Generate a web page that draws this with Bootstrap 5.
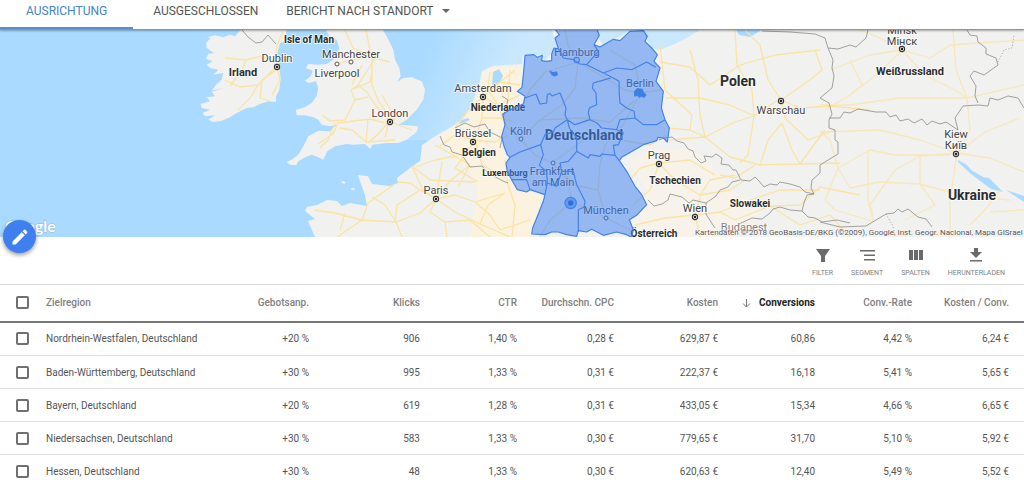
<!DOCTYPE html>
<html lang="de">
<head>
<meta charset="utf-8">
<meta name="viewport" content="width=device-width, initial-scale=1">
<title>Standorte</title>
<link href="https://cdn.jsdelivr.net/npm/bootstrap@5.3.0/dist/css/bootstrap.min.css" rel="stylesheet">
<style>
  body { font-family: Roboto, "Liberation Sans", sans-serif; font-size: 10px; color: #5a5a5a; }
  .tabbar { height: 30px; border-bottom: 1px solid #8d949b; box-shadow: 0 1px 2px rgba(0,0,0,.3); position: relative; }
  .tabbar .nav-link { font-size: 12px; line-height: 20px; font-weight: 400; color: #555; padding: 1px 0 8px; border-radius: 0; }
  .tabbar .nav-link.active { color: #4384cc; border-bottom: 2px solid #5a8fcb; padding: 1px 26px 6px; }
  .caret { border: 4px solid transparent; border-top-color: #666; border-bottom: 0; }
  .geo { height: 207px; background: #aadaff; }
  .geo svg { display: block; width: 100%; height: 100%; }
  .geo text { font-family: Roboto, "Liberation Sans", sans-serif; fill: #444; stroke: #fff; stroke-opacity: .7; stroke-width: 2px; paint-order: stroke; stroke-linejoin: round; }
  .geo .city { font-size: 11px; text-anchor: middle; }
  .geo .land { font-size: 10px; font-weight: 700; fill: #2d2d2d; text-anchor: middle; }
  .geo .land-sm { font-size: 9px; }
  .geo .land-md { font-size: 11px; }
  .geo .land-lg { font-size: 14px; }
  .geo .fine { font-size: 8px; fill: #555; stroke-width: 1px; }
  .geo .logo { font-family: Lato, sans-serif; font-size: 16px; font-weight: 700; fill: #fff; stroke: #7fa9c9; stroke-width: 1px; }
  .edit-btn { left: 3px; bottom: -16px; width: 33px; height: 33px; background: #3f80ee; box-shadow: 0 2px 4px rgba(0,0,0,.4); }
  .tools { height: 47px; gap: 18px; padding: 9px 19px 0 0; }
  .tools button { font-size: 7px; line-height: 8px; color: #808080; }
  .tools svg { width: 18px; height: 18px; fill: #6a6a6a; margin-bottom: 5px; }
  .report { table-layout: fixed; border-top: 1px solid #dcdcdc; --bs-table-color: #555; }
  .report th, .report td { height: 33px; padding: 1px 15px 0 0; line-height: 14px; text-align: right; vertical-align: middle; border-bottom: 1px solid #e0e0e0; white-space: nowrap; }
  .report thead th { height: 37px; padding-top: 0; font-weight: 500; color: #808080; border-bottom: 2px solid #787878; }
  .report tbody tr:first-child td { height: 34px; }
  .report thead th.sorted { color: #222; font-weight: 700; }
  .report .pick { text-align: left; padding: 0 0 0 16px; }
  .report td.region, .report th.region { text-align: left; padding-right: 0; overflow: visible; }
  .report .form-check-input { display: block; width: 13px; height: 13px; margin: 0; border: 2px solid #707070; border-radius: 2px; }
  .c-pick { width: 46px; } .c-a { width: 111px; } .c-b { width: 97px; } .c-c { width: 104px; }
</style>
</head>
<body class="bg-white vh-100 overflow-hidden">
<header>
  <nav class="tabbar nav d-flex align-items-start bg-white z-1" aria-label="Standorte">
    <a class="nav-link active me-3" href="#">AUSRICHTUNG</a>
    <a class="nav-link ms-1 me-4" href="#">AUSGESCHLOSSEN</a>
    <a class="nav-link ms-1 d-flex align-items-center" href="#">BERICHT NACH STANDORT <span class="caret ms-2"></span></a>
  </nav>
</header>
<main>
  <section class="geo position-relative" aria-label="Karte">
    <svg viewBox="0 30 1024 207" preserveAspectRatio="xMidYMid slice">
      <defs>
        <g id="capital"><circle r="2.6" fill="#fff" stroke="#333" stroke-width="1.1"/><circle r="1.3" fill="#222"/></g>
        <circle id="town" r="2" fill="#fff" stroke="#555" stroke-width="1"/>
        <linearGradient id="shoal" gradientUnits="userSpaceOnUse" x1="425" y1="50" x2="500" y2="85"><stop offset="0" stop-color="#c9e8fd" stop-opacity="0"/><stop offset="1" stop-color="#c9e8fd"/></linearGradient>
      </defs>
      <path fill="url(#shoal)" d="M400 28H700L655 70 520 75 480 105 440 140 400 140z"/>
      <!-- land masses -->
      <g fill="#f1f1f0">
        <g transform="translate(190 28) scale(.333333)">
          <path d="M290 0L285 40 270 45 262 75 265 100 272 150 268 185 258 205 258 222 235 220 210 228 190 238 170 240 150 250 135 258 120 268 95 278 70 282 55 275 75 262 45 265 38 255 60 245 35 240 32 228 60 220 50 208 75 205 65 192 100 180 65 188 78 170 95 155 100 135 70 140 85 125 60 120 50 110 68 100 48 92 55 78 72 75 50 60 48 45 62 30 52 28 75 22 100 28 120 20 135 25 150 8 160 0z"/>
          <path d="M405 0L418 25 440 35 448 60 440 80 430 95 410 108 385 110 355 108 348 120 368 128 362 145 345 158 355 165 378 160 385 180 380 205 365 225 345 238 318 245 320 262 345 262 370 268 385 275 395 290 420 295 440 290 420 310 385 308 355 325 340 355 325 380 305 395 290 402 300 410 318 412 325 400 345 388 365 380 385 388 400 395 412 370 435 355 470 348 490 350 525 348 540 362 548 350 590 345 625 345 650 335 680 312 685 295 650 292 625 290 650 275 680 245 700 215 705 185 695 160 665 148 640 150 622 162 632 145 628 120 615 95 610 65 590 25 575 0z"/>
          <path d="M455 458l12 4-4 6-8-4zM482 480l13 1-3 6-8-2z"/>
        </g>
        <path d="M315 237L308 221 315 219 305 211 307 207 317 205 327 200 337 201 342 206 350 203 367 206 365 195 362 187 358 175 368 176 372 184 390 186 398 183 397 178 410 168 420 161 422 145 437 135 453 126 465 116 473 101 479 85 482 71 493 66 522 64 523 55 542 55 545 61 552 52 558 48 553 35 552 28H597L597 35 603 45 617 38 630 31 643 32 652 48 660 50 677 43 690 36 702 28H735L739 35 750 37 760 31 764 28H1024V240H315z"/>
      </g>
      <path fill="#fbf3df" d="M440 136L455 127 466 116 475 101 480 86 483 73 493 68 521 66 524 90 505 112 503 148 508 178 528 190 542 196 533 237H470L478 190 470 172 455 160z"/>
      <path fill="#fbf5e6" d="M651 150L630 162 646 190 633 220 632 237H740L765 205 730 190 722 175 690 148z" opacity=".6"/>
      <path fill="#aadaff" d="M493 72l6-3 4 7-4 8-7 1zM458 121l10-3 2 2-10 4zM466 108l9 1-2 3zM958 160l9 5 4 5 12 7 6 1 14 14-12-3-20-15-13-12zM1006 190l18 6v6z"/>
      <!-- major roads -->
      <g fill="none" stroke="#fae3a3" stroke-width="1.3" stroke-linejoin="round">
        <path d="M277 64L262 56 246 60 225 58M277 66L280 80 272 95M275 68L258 85 250 98 238 110M258 85L240 87 225 80M276 70L262 80 260 98 270 101M275 62L277 45 283 32M246 60L242 70 230 86"/>
        <path d="M345 30L353 48 370 56 374 60 358 85 351 90 355 100 345 120 330 121 322 115M358 85L367 92 375 105 389 120 398 125 412 130M366 30L372 60 372 85 378 100 388 115M351 90L370 82 372 72M337 64L350 60 370 57 390 62M338 123L370 119 385 123M335 123L328 140 320 148M338 123L333 134 318 144M355 100L368 97M389 122L378 134 368 143 M368 119L366 143M389 120L385 138M390 125L395 118 382 95 M340 128L352 130 366 142 395 140M362 65L352 85"/>
        <path d="M436 199L420 190 410 183 398 182M436 199L423 190 412 166M436 199L450 181 470 165 455 156 435 145M436 199L455 195 475 202 505 193M436 199L455 212 480 224 510 237M436 199L430 212 445 222 447 237M436 199L420 213 396 222 362 220 337 237M362 220L335 213 314 210M362 220L368 203 395 184M396 222L402 237M396 222L385 205 372 197M412 166L430 180 450 181 475 182M420 190L397 205 395 222M442 162L436 199M455 156L435 160 412 168M470 165L458 187M475 202L490 215 500 230 530 220M480 224L488 205 505 193M445 222L470 220 490 237M345 213L340 230M505 160L508 185 515 205 512 237"/>
        <path d="M483 97L498 105 520 95M483 97L482 118 475 140 482 165 505 178M483 97L500 82 515 70M483 97L470 108 455 128M475 140L455 135 440 146M475 140L495 142 508 135M498 105L505 125 520 139M500 82L520 85M475 140L465 155 455 168 478 182M482 118L500 118 515 122M490 72L488 90 498 105M510 70L508 100"/>
        <path stroke="#ecdcb0" d="M520 139L540 120 562 105 575 88 578 62 568 45 565 30M578 62L600 75 625 90 640 93 662 90M520 139L535 155 552 163 568 180 572 202 590 210 606 218 630 230M552 163L570 150 590 135 620 140 650 145 666 135M606 218L598 190 600 165 605 145 620 130 638 98M578 62L545 72 530 90 520 110M540 120L580 118 610 122 635 100M640 88L635 65 610 50M572 202L550 220 540 237M552 163L575 185 598 190"/>
        <path d="M666 98L700 98 730 105 754 116 775 102 781 100 800 108 830 106 870 110M660 62L690 67 710 85 740 65 775 55 820 50M735 30L737 65 752 90 754 116 748 155 740 163M668 128L690 130 705 137 730 157 760 165 800 164 840 163M705 137L700 115 698 80 690 50M705 137L735 122 754 116M781 100L768 80 760 45 745 30M781 100L810 80 822 70 815 50M760 165L768 140 782 123 792 150 800 164M781 100L785 118 808 140 835 130M660 45L665 90 692 115 690 130M670 140L705 137M755 165L735 178 720 175M800 164L810 150 825 130"/>
        <path d="M659 163L640 168 630 180M659 163L675 180 700 195 710 180 735 175M659 163L690 160 715 175M659 163L650 190 633 205M695 215L700 197M695 215L720 212 735 220 770 206 800 205 820 187 860 195M695 215L665 218 635 225M695 215L700 237M700 195L730 190 745 180M770 206L800 225 830 215 850 237M720 212L750 200 780 190 820 190"/>
        <g opacity=".7"><path d="M902 50L870 55 830 70M902 50L930 58 950 45 1024 40M902 50L925 75 955 90 967 98M902 50L880 72 850 95 825 110M902 50L880 38 860 30M850 60L862 85 850 95M953 30L956 70 967 98 970 130 957 155M820 105L850 105 900 98 967 98 1024 85M820 132L880 130 920 140 957 153 990 158 1024 172M957 153L950 200 950 237M957 153L920 156 895 170 870 205 873 215M957 153L985 132 1020 118M838 168L870 150 895 155 950 155M838 168L850 188 880 182 920 184 960 195 1010 200M838 168L830 140 820 132M838 168L825 200 835 210 875 222M920 156L920 184 935 205 905 220M1000 190L985 210 970 225M990 212L1024 210M868 150L868 200 873 220"/></g>
      </g>
      <!-- national borders -->
      <g fill="none" stroke="#8c8c8c" stroke-width=".8" stroke-linejoin="round">
        <path d="M242 30L248 37 256 43 262 42 268 35 276 44M440 136L444 145 450 147 452 152 462 155 470 167 482 166 488 173 503 181 508 183M455 128L465 123 474 127 485 124 490 132 502 138 500 148M502 96L508 100 503 118"/>
        <path d="M659 140L664 138 672 137 677 141 684 143 688 149 693 151 695 157 701 163 706 161 704 156 712 157 716 154 722 158 721 164 729 165 733 170 736 170 741 180 750 181 755 177 759 181 764 187 770 184 777 185 780 182 790 184 800 187 805 192 814 194M740 180L732 182 728 187 720 190 716 196 706 203 693 200 689 203 682 197 670 194 668 200 662 204 654 206 648 200M706 203L706 214 711 222 715 228M739 224L752 218 762 219 770 213 773 209 780 207 790 210 802 211 808 217 815 218 822 222 837 220 850 223M814 194L811 188 812 180 820 173 820 165 838 154 838 142 835 140 835 130 829 128 829 120 832 114 829 103 820 98 832 88 834 76 832 68 833 60 828 48 825 38 815 34 790 32 762 31M828 48L838 49 850 45 856 47 866 38 868 30M802 211L804 203 807 195 814 194M829 118L840 118 844 112 850 113 858 109 876 112 886 112 890 117 896 115 900 121 908 119 914 123 922 119 927 125 932 121 940 124 946 122 952 126 958 130 955 118 963 106 978 105 988 106 990 98 998 100 1008 96 1018 98 1024 108M978 103L975 96 976 86 970 76 974 71 984 75 998 65 996 58 986 54 986 48 978 42 977 36 970 35 967 30M820 222L840 227 866 226 886 214 894 213 898 209 902 212 908 209 918 217 926 219 932 227"/>
        <path stroke-dasharray="1 2" d="M998 62L1004 50 1012 48 1014 35M886 214l7 12 2 10"/>
      </g>
      <!-- map labels -->
      <text class="land" x="309" y="43">Isle of Man</text>
      <text class="city" x="277" y="62">Dublin</text><use href="#capital" x="277" y="67"/>
      <text class="land land-md" x="243" y="76">Irland</text>
      <text class="city" x="351" y="58">Manchester</text><use href="#town" x="351" y="62"/>
      <text class="city" x="337" y="77">Liverpool</text><use href="#town" x="337" y="64"/>
      <text class="city" x="390" y="117">London</text><use href="#capital" x="390" y="122"/>
      <text class="city" x="436" y="194">Paris</text><use href="#capital" x="436" y="199"/>
      <text class="city" x="483" y="92">Amsterdam</text><use href="#capital" x="483" y="97"/>
      <text class="land" x="498" y="111">Niederlande</text>
      <text class="city" x="473" y="137">Brüssel</text><use href="#capital" x="473" y="142"/>
      <text class="land" x="479" y="156">Belgien</text>
      <text class="land land-sm" x="505" y="176">Luxemburg</text>
      <text class="city" x="577" y="56">Hamburg</text>
      <text class="city" x="640" y="87">Berlin</text>
      <text class="city" x="521" y="135">Köln</text><use href="#town" x="521" y="139"/>
      <text class="land land-lg" x="584" y="140">Deutschland</text>
      <use href="#town" x="553" y="163"/>
      <text class="city" x="552" y="175">Frankfurt</text><text class="city" x="553" y="186">am Main</text>
      <text class="city" x="606" y="214">München</text><use href="#town" x="606" y="218"/>
      <text class="land land-lg" x="738" y="86">Polen</text>
      <text class="city" x="781" y="114">Warschau</text><use href="#capital" x="781" y="101"/>
      <text class="city" x="659" y="159">Prag</text><use href="#capital" x="659" y="164"/>
      <text class="land" x="675" y="184">Tschechien</text>
      <text class="land" x="750" y="207">Slowakei</text>
      <text class="city" x="695" y="212">Wien</text><use href="#capital" x="695" y="217"/>
      <text class="land" x="654" y="237">Österreich</text>
      <text class="city" x="744" y="231" opacity=".65">Budapest</text>
      <text class="city" x="902" y="34">Minsk</text><text class="city" x="902" y="45">Мінск</text><use href="#capital" x="902" y="49"/>
      <text class="land land-md" x="910" y="75">Weißrussland</text>
      <text class="city" x="956" y="138">Kiew</text><text class="city" x="956" y="149">Київ</text><use href="#capital" x="956" y="154"/>
      <text class="land land-lg" x="972" y="200">Ukraine</text>
      <!-- targeted states -->
      <g transform="translate(430 28) scale(.333333)" fill="none" stroke="#4382e6" stroke-width="3.500" stroke-linejoin="round">
        <path fill="#4285f4" fill-opacity=".52" d="M372 0L388 20 375 30 385 62 372 60 365 78 365 98 348 100 335 98 337 82 322 88 312 80 285 82 283 110 280 140 276 178 262 190 285 205 280 228 250 240 218 258 225 290 215 325 222 355 232 380 240 388 228 405 232 430 245 455 262 485 290 492 300 485 345 500 340 520 320 570 308 600 305 618 345 620 365 612 385 612 410 620 440 625 445 608 470 612 485 604 520 622 560 612 590 620 605 628 610 605 598 575 620 562 650 530 635 500 615 475 590 430 568 398 575 388 640 350 680 338 684 328 700 330 712 342 718 300 705 275 694 240 700 190 678 160 690 120 672 100 682 80 665 60 645 40 652 25 640 8 600 10 570 38 550 34 510 57 492 50 508 22 500 0z"/>
        <path d="M285 210L318 198 330 228 350 225 352 200 360 196 366 204 390 195 408 240 405 262 412 275 375 300 370 312 345 320 332 350 270 372 240 388M332 350L340 380 328 412 350 430 352 465 345 500M245 455L290 455 300 485M385 62L400 90 430 95 450 108 470 110 520 135 550 150 567 160 568 200 570 225 590 240 612 250 615 270 640 290 680 290 705 275M470 110L505 70 492 50M520 135L560 120 605 125 650 102 678 118M542 150L515 158 490 165 487 180 498 195 500 230 478 240 475 255 480 275 435 290 412 275 418 300 440 330 440 370 475 390 480 380 510 385 515 378 555 382 568 398M480 275L500 284 515 300 560 305 570 275 615 270M560 305L580 315 565 350 550 352 555 382M440 370L415 400 390 405 395 430 430 430 440 470 465 520 462 538 445 545 445 612M352 465L380 475 395 430"/>
        <path fill="#3d7fe6" d="M360 130l10 4 10-2 2 8-8 4-8-4zM614 190l8-8 14 2 6 12 6 4-6 8-8-4-6 4-4-6-10 2z"/>
        <circle cx="440" cy="96" r="8"/>
        <circle cx="422" cy="525" r="17" fill="#4285f4" fill-opacity=".6"/>
        <circle cx="422" cy="525" r="8" fill="#2f70d8" stroke="none"/>
      </g>
      <text class="fine" x="695" y="235">Kartendaten © 2018 GeoBasis-DE/BKG (©2009), Google, Inst. Geogr. Nacional, Mapa GISrael</text>
      <text class="logo" x="5" y="232">Google</text>
    </svg>
    <button type="button" class="edit-btn btn rounded-circle position-absolute p-0 d-flex align-items-center justify-content-center" aria-label="Bearbeiten">
      <svg viewBox="0 0 24 24" style="width:20px;height:20px" fill="#fff"><path d="M3 17.25V21h3.75L17.81 9.94l-3.75-3.75zM20.71 7.04a1 1 0 0 0 0-1.41l-2.34-2.34a1 1 0 0 0-1.41 0l-1.83 1.83 3.75 3.75z"/></svg>
    </button>
  </section>

  <div class="tools d-flex justify-content-end align-items-start" role="toolbar" aria-label="Tabellenwerkzeuge">
    <button type="button" class="border-0 bg-transparent p-0 d-flex flex-column align-items-center"><svg viewBox="0 0 18 18"><path d="M2 3h14l-5 7v6H7v-6z"/></svg>FILTER</button>
    <button type="button" class="border-0 bg-transparent p-0 d-flex flex-column align-items-center"><svg viewBox="0 0 18 18"><path d="M2 4h15v1.500H2zM6 8.500h11V10H6zM6 13h11v1.500H6z"/></svg>SEGMENT</button>
    <button type="button" class="border-0 bg-transparent p-0 d-flex flex-column align-items-center"><svg viewBox="0 0 18 18"><path d="M2 4h4v10H2zM7 4h4v10H7zM12 4h4v10h-4z"/></svg>SPALTEN</button>
    <button type="button" class="border-0 bg-transparent p-0 d-flex flex-column align-items-center"><svg viewBox="0 0 18 18"><path d="M7 2h4v4h4l-6 6-6-6h4zM3 14h12v1.500H3z"/></svg>HERUNTERLADEN</button>
  </div>

  <table class="report table mb-0 w-100">
    <colgroup><col class="c-pick"><col><col class="c-a"><col class="c-a"><col class="c-b"><col class="c-b"><col class="c-c"><col class="c-b"><col class="c-b"><col class="c-b"></colgroup>
    <thead>
      <tr><th class="pick"><input class="form-check-input" type="checkbox" aria-label="Alle auswählen"></th><th class="region">Zielregion</th><th>Gebotsanp.</th><th>Klicks</th><th>CTR</th><th>Durchschn. CPC</th><th>Kosten</th><th class="sorted"><svg class="me-2" width="9" height="9" viewBox="0 0 9 9" fill="none" stroke="#777" aria-hidden="true"><path d="M4.500 0v8M1 4.500l3.500 3.500 3.500-3.500"/></svg>Conversions</th><th>Conv.-Rate</th><th>Kosten / Conv.</th></tr>
    </thead>
    <tbody>
      <tr><td class="pick"><input class="form-check-input" type="checkbox" aria-label="Nordrhein-Westfalen"></td><td class="region">Nordrhein-Westfalen, Deutschland</td><td>+20 %</td><td>906</td><td>1,40 %</td><td>0,28 €</td><td>629,87 €</td><td>60,86</td><td>4,42 %</td><td>6,24 €</td></tr>
      <tr><td class="pick"><input class="form-check-input" type="checkbox" aria-label="Baden-Württemberg"></td><td class="region">Baden-Württemberg, Deutschland</td><td>+30 %</td><td>995</td><td>1,33 %</td><td>0,31 €</td><td>222,37 €</td><td>16,18</td><td>5,41 %</td><td>5,65 €</td></tr>
      <tr><td class="pick"><input class="form-check-input" type="checkbox" aria-label="Bayern"></td><td class="region">Bayern, Deutschland</td><td>+20 %</td><td>619</td><td>1,28 %</td><td>0,31 €</td><td>433,05 €</td><td>15,34</td><td>4,66 %</td><td>6,65 €</td></tr>
      <tr><td class="pick"><input class="form-check-input" type="checkbox" aria-label="Niedersachsen"></td><td class="region">Niedersachsen, Deutschland</td><td>+30 %</td><td>583</td><td>1,33 %</td><td>0,30 €</td><td>779,65 €</td><td>31,70</td><td>5,10 %</td><td>5,92 €</td></tr>
      <tr><td class="pick"><input class="form-check-input" type="checkbox" aria-label="Hessen"></td><td class="region">Hessen, Deutschland</td><td>+30 %</td><td>48</td><td>1,33 %</td><td>0,30 €</td><td>620,63 €</td><td>12,40</td><td>5,49 %</td><td>5,52 €</td></tr>
    </tbody>
  </table>
</main>
<script src="https://cdn.jsdelivr.net/npm/bootstrap@5.3.0/dist/js/bootstrap.bundle.min.js"></script>
</body>
</html>
